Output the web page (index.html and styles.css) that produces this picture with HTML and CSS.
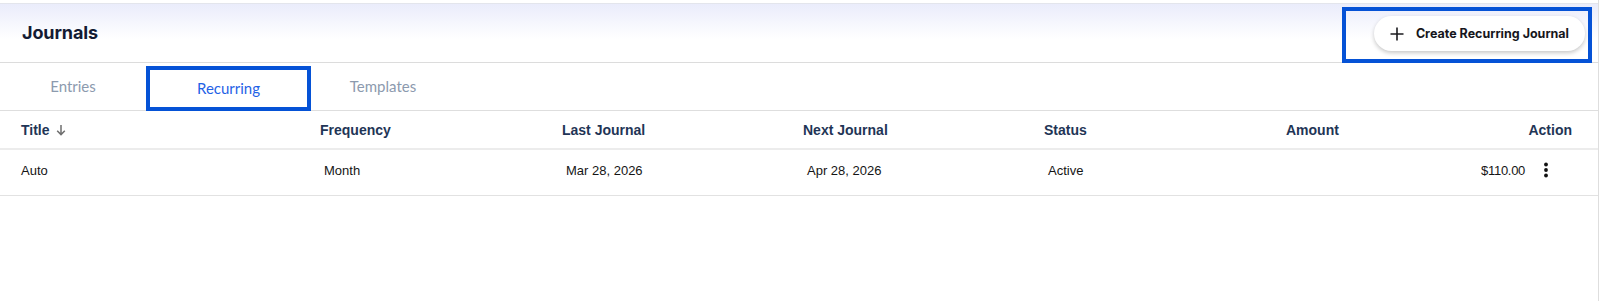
FILE: index.html
```html
<!DOCTYPE html>
<html lang="en">
<head>
  <meta charset="UTF-8">
  <title>Journals</title>
  <link rel="stylesheet" href="styles.css">
</head>
<body>
  <div class="journals-page">
    <!-- header -->
    <div class="top-bar">
      <h1 class="page-title">Journals</h1>
      <div class="highlight create-highlight">
        <button class="create-btn">
          <svg class="plus-icon" width="16" height="16" viewBox="0 0 16 16">
            <path d="M8 1.5v13M1.5 8h13" stroke="#1b1b1f" stroke-width="1.6" fill="none"/>
          </svg>
          <span>Create Recurring Journal</span>
        </button>
      </div>
    </div>

    <!-- tabs -->
    <div class="tabs">
      <div class="tab tab-entries">Entries</div>
      <div class="highlight tab-highlight">
        <div class="tab tab-active">Recurring</div>
      </div>
      <div class="tab tab-templates">Templates</div>
    </div>

    <!-- table -->
    <div class="journal-table">
      <div class="table-row table-head">
        <div class="cell">
          Title
          <svg class="sort-arrow" width="10" height="12" viewBox="0 0 10 12">
            <path d="M5 1v9.5M1.2 6.8L5 10.6l3.8-3.8" stroke="#6f6f6f" stroke-width="1.5" fill="none"/>
          </svg>
        </div>
        <div class="cell">Frequency</div>
        <div class="cell">Last Journal</div>
        <div class="cell">Next Journal</div>
        <div class="cell">Status</div>
        <div class="cell cell-last">
          <span>Amount</span>
          <span>Action</span>
        </div>
      </div>
      <div class="table-row table-body">
        <div class="cell">Auto</div>
        <div class="cell">Month</div>
        <div class="cell">Mar 28, 2026</div>
        <div class="cell">Apr 28, 2026</div>
        <div class="cell">Active</div>
        <div class="cell cell-amount">$110.00</div>
        <div class="cell cell-more">
          <svg class="more-icon" width="6" height="16" viewBox="0 0 6 16">
            <circle cx="3" cy="2.5" r="1.9" fill="#111"/>
            <circle cx="3" cy="8" r="1.9" fill="#111"/>
            <circle cx="3" cy="13.5" r="1.9" fill="#111"/>
          </svg>
        </div>
      </div>
    </div>
  </div>
</body>
</html>
```

FILE: styles.css
```css
/* page */
body {
  margin: 0;
  padding: 0;
  background-color: #ffffff;
  font-family: "Liberation Sans", Arial, sans-serif;
}

.journals-page {
  width: 1599px;
  height: 301px;
  border-right: 1px solid #dedede;
  box-sizing: border-box;
  padding-top: 3px;
}

/* blue annotation frames */
.highlight {
  border: 4px solid #0552d6;
  box-sizing: border-box;
}

/* header */
.top-bar {
  height: 60px;
  border-top: 1px solid #e3e5ec;
  border-bottom: 1px solid #dcdcdc;
  box-sizing: border-box;
  background: linear-gradient(#eaecfb, #ffffff 60%);
  display: flex;
  justify-content: space-between;
  align-items: flex-start;
}
.page-title {
  margin: 0;
  padding: 18px 0 0 22px;
  font-family: Inter, sans-serif;
  font-size: 18px;
  font-weight: 700;
  color: #141b33;
  letter-spacing: -0.1px;
}
.create-highlight {
  width: 250px;
  height: 56px;
  margin: 3px 6px 0 0;
  display: flex;
  justify-content: flex-end;
  align-items: flex-start;
  padding: 5px 3px 0 0;
}
.create-btn {
  height: 35px;
  padding: 0 16px 0 15px;
  border: none;
  border-radius: 18px;
  background-color: #ffffff;
  box-shadow: 0 2px 4px rgba(0, 0, 0, 0.22);
  display: flex;
  align-items: center;
  gap: 11px;
  font-family: Inter, sans-serif;
  font-size: 12.5px;
  font-weight: 700;
  color: #16161c;
  cursor: pointer;
}

/* tabs */
.tabs {
  height: 48px;
  border-bottom: 1px solid #dedede;
  box-sizing: border-box;
  display: flex;
  align-items: flex-start;
}
.tab {
  line-height: 47px;
  text-align: center;
  font-family: Lato, sans-serif;
  font-size: 15px;
  color: #8c9aae;
}
.tab-entries {
  width: 146px;
}
.tab-highlight {
  width: 165px;
  height: 45px;
  margin-top: 3px;
}
.tab-active {
  line-height: 36px;
  color: #1f62e6;
}
.tab-templates {
  width: 144px;
}

/* table */
.table-row {
  display: grid;
  grid-template-columns: 320px 242px 241px 241px 242px 244px 68px;
  align-items: center;
}
.table-head {
  height: 37px;
  border-bottom: 2px solid #ececec;
  font-size: 14px;
  font-weight: 700;
  color: #1f3556;
}
.table-body {
  height: 46px;
  padding-bottom: 5px;
  box-sizing: border-box;
  border-bottom: 1px solid #e2e2e2;
  font-size: 13px;
  color: #151515;
}
.table-head .cell:first-child,
.table-body .cell:first-child {
  padding-left: 21px;
}
.table-body .cell {
  padding-left: 4px;
}
.sort-arrow {
  margin-left: 3px;
  vertical-align: -1px;
}
.cell-last {
  grid-column: 6 / 8;
  display: flex;
  justify-content: space-between;
  padding-right: 26px;
}
.table-body .cell-amount {
  text-align: right;
  padding-right: 5px;
  letter-spacing: -0.3px;
}
.table-body .cell-more {
  padding-left: 13px;
  display: flex;
  align-items: center;
}
```
